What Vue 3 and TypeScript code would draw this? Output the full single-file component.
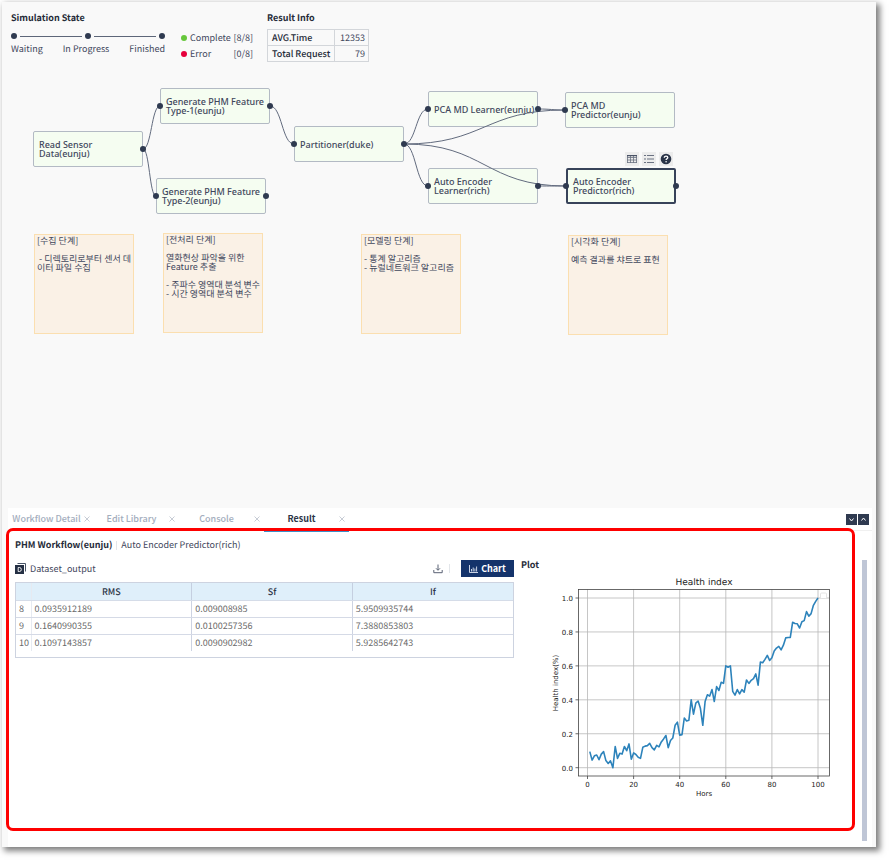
<script setup lang="ts">
import { computed, ref } from 'vue'

interface FlowNode {
  id: string
  label: string
  x: number
  y: number
  input: boolean
  output: boolean
}

interface Note {
  x: number
  y: number
  text: string
}

const NODE_W = 110
const NODE_H = 36

const nodes: FlowNode[] = [
  { id: 'read', label: 'Read Sensor\nData(eunju)', x: 31, y: 61, input: false, output: true },
  { id: 'gen1', label: 'Generate PHM Feature\nType-1(eunju)', x: 158, y: 18, input: true, output: true },
  { id: 'gen2', label: 'Generate PHM Feature\nType-2(eunju)', x: 154, y: 108, input: true, output: true },
  { id: 'part', label: 'Partitioner(duke)', x: 292, y: 56, input: true, output: true },
  { id: 'pcaL', label: 'PCA MD Learner(eunju)', x: 426, y: 21, input: true, output: true },
  { id: 'pcaP', label: 'PCA MD\nPredictor(eunju)', x: 563, y: 22, input: true, output: false },
  { id: 'aeL', label: 'Auto Encoder\nLearner(rich)', x: 426, y: 98, input: true, output: true },
  { id: 'aeP', label: 'Auto Encoder\nPredictor(rich)', x: 564, y: 98, input: true, output: true },
]

const links: [string, string][] = [
  ['read', 'gen1'],
  ['read', 'gen2'],
  ['gen1', 'part'],
  ['part', 'pcaL'],
  ['part', 'pcaP'],
  ['part', 'aeL'],
  ['part', 'aeP'],
  ['pcaL', 'pcaP'],
  ['aeL', 'aeP'],
]

const selected = ref('aeP')

const byId = (id: string): FlowNode => nodes.find((n) => n.id === id) as FlowNode

const edgePaths = links.map(([from, to]) => {
  const a = byId(from)
  const b = byId(to)
  const x1 = a.x + NODE_W
  const y1 = a.y + NODE_H / 2
  const x2 = b.x
  const y2 = b.y + NODE_H / 2
  const mid = (x1 + x2) / 2
  return `M${x1} ${y1}C${mid} ${y1} ${mid} ${y2} ${x2} ${y2}`
})

const ports = nodes.flatMap((n) => {
  const list: { x: number; y: number }[] = []
  if (n.input) list.push({ x: n.x, y: n.y + NODE_H / 2 })
  if (n.output) list.push({ x: n.x + NODE_W, y: n.y + NODE_H / 2 })
  return list
})

const notes: Note[] = [
  { x: 32, y: 164, text: '[수집 단계]\n\n - 디렉토리로부터 센서 데\n이터 파일 수집' },
  { x: 161, y: 163, text: '[전처리 단계]\n\n열화현상 파악을 위한\nFeature 추출\n\n- 주파수 영역대 분석 변수\n- 시간 영역대 분석 변수' },
  { x: 359, y: 164, text: '[모델링 단계]\n\n- 통계 알고리즘\n- 뉴럴네트워크 알고리즘' },
  { x: 566, y: 165, text: '[시각화 단계]\n\n예측 결과를 챠트로 표현' },
]

const tabs = ['Workflow Detail', 'Edit Library', 'Console', 'Result']
const activeTab = ref('Result')

const rows = [
  ['8', '0.0935912189', '0.009008985', '5.9509935744'],
  ['9', '0.1640990355', '0.0100257356', '7.3880853803'],
  ['10', '0.1097143857', '0.0090902982', '5.9285642743'],
]

const health: number[] = [
  0.095, 0.045, 0.07, 0.075, 0.047, 0.08, 0.095, 0.042, 0.025, 0.04,
  0, 0.125, 0.055, 0.085, 0.08, 0.125, 0.1, 0.14, 0.05, 0.087,
  0.078, 0.062, 0.055, 0.12, 0.127, 0.13, 0.143, 0.118, 0.105, 0.132,
  0.123, 0.152, 0.17, 0.19, 0.118, 0.16, 0.175, 0.25, 0.268, 0.192,
  0.195, 0.293, 0.276, 0.28, 0.4, 0.315, 0.38, 0.393, 0.35, 0.25,
  0.39, 0.43, 0.422, 0.46, 0.39, 0.478, 0.455, 0.503, 0.497, 0.6,
  0.592, 0.6, 0.45, 0.428, 0.46, 0.435, 0.46, 0.445, 0.517, 0.497,
  0.515, 0.525, 0.553, 0.487, 0.622, 0.618, 0.638, 0.662, 0.632, 0.648,
  0.687, 0.705, 0.715, 0.695, 0.722, 0.765, 0.767, 0.768, 0.857, 0.85,
  0.848, 0.823, 0.86, 0.867, 0.92, 0.893, 0.908, 0.957, 0.98, 1,
]

const px = (v: number): number => 37.5 + v * 2.305
const py = (v: number): number => 193.7 - v * 169.7
const xTicks = [0, 20, 40, 60, 80, 100]
const yTicks = [0, 0.2, 0.4, 0.6, 0.8, 1]
const linePoints = computed(() =>
  health.map((v, i) => `${px(i + 1).toFixed(1)},${py(v).toFixed(1)}`).join(' '),
)
</script>

<template>
  <main class="window">
    <header class="summary">
      <section class="state">
        <h2>Simulation State</h2>
        <div class="track">
          <i class="dot"></i><i class="bar"></i><i class="dot"></i><i class="bar"></i><i class="dot"></i>
        </div>
        <div class="steps"><span>Waiting</span><span>In Progress</span><span>Finished</span></div>
      </section>
      <ul class="counts">
        <li><i class="led ok"></i><span>Complete</span><span>[8/8]</span></li>
        <li><i class="led bad"></i><span>Error</span><span>[0/8]</span></li>
      </ul>
      <section class="info">
        <h2>Result Info</h2>
        <table>
          <tbody>
            <tr><th scope="row">AVG.Time</th><td>12353</td></tr>
            <tr><th scope="row">Total Request</th><td>79</td></tr>
          </tbody>
        </table>
      </section>
    </header>

    <section class="canvas" aria-label="Workflow">
      <button
        v-for="n in nodes"
        :key="n.id"
        type="button"
        class="node"
        :class="{ selected: n.id === selected }"
        :style="{ left: n.x + 'px', top: n.y + 'px' }"
        @click="selected = n.id"
      >{{ n.label }}</button>

      <svg class="edges" aria-hidden="true">
        <path v-for="(d, i) in edgePaths" :key="i" :d="d" />
        <circle v-for="(p, i) in ports" :key="'p' + i" :cx="p.x" :cy="p.y" r="3" />
      </svg>

      <div class="tools">
        <button type="button" aria-label="Table">
          <svg viewBox="0 0 14 14"><path d="M2.500 3v8M5.500 3v8M8.500 3v8M11.500 3v8M2 5.500h10M2 8h10M2 10.500h10" fill="none" stroke="#6b7282" stroke-width=".8" /><path d="M2 3h10v1.200H2z" fill="#4a5366" /></svg>
        </button>
        <button type="button" aria-label="List">
          <svg viewBox="0 0 14 14"><path d="M2 3.500h2M2 7h2M2 10.500h2M5 3.500h7M5 7h7M5 10.500h7" fill="none" stroke="#6b7282" /></svg>
        </button>
        <button type="button" aria-label="Help">
          <svg viewBox="0 0 14 14"><circle cx="7" cy="7" r="5.3" fill="#2a3448" /><path d="M5.300 5.700c0-2.300 3.500-2.100 3.500-.1 0 1.200-1.700 1.300-1.700 2.500" fill="none" stroke="#fff" stroke-width="1.3" /><circle cx="7.1" cy="9.8" r=".8" fill="#fff" /></svg>
        </button>
      </div>

      <p
        v-for="(t, i) in notes"
        :key="'n' + i"
        class="note"
        :style="{ left: t.x + 'px', top: t.y + 'px' }"
      >{{ t.text }}</p>
    </section>

    <section class="panel">
      <nav class="tabs">
        <div v-for="t in tabs" :key="t" class="tab" :class="{ active: t === activeTab }">
          <button type="button" class="name" @click="activeTab = t">{{ t }}</button>
          <button type="button" class="close" :aria-label="'Close ' + t">
            <svg viewBox="0 0 6 6"><path d="M.5.5l5 5M5.500.5l-5 5" /></svg>
          </button>
        </div>
        <div class="fold">
          <button type="button" aria-label="Collapse"><svg viewBox="0 0 11 11"><path d="M3.500 4.500l2 2.500 2-2.500" /></svg></button>
          <button type="button" aria-label="Expand"><svg viewBox="0 0 11 11"><path d="M3.500 6.500l2-2.500 2 2.500" /></svg></button>
        </div>
      </nav>

      <div class="body">
        <p class="crumbs"><strong>PHM Workflow(eunju)</strong><i></i><span>Auto Encoder Predictor(rich)</span></p>
        <div class="result">
          <section class="data">
            <div class="bar-row">
              <svg class="ds" viewBox="0 0 11 11" aria-hidden="true">
                <path d="M2.500.5h8v8" fill="none" stroke="#4a5568" />
                <path d="M0 2h9v9H0z" fill="#253044" />
                <path d="M3.200 4.500h1.300q1.800 0 1.800 2t-1.800 2H3.200z" fill="none" stroke="#fff" stroke-width=".9" />
              </svg>
              <span class="ds-name">Dataset_output</span>
              <button type="button" class="download" aria-label="Download">
                <svg viewBox="0 0 10 10"><path d="M5 .5v5.500M3 4.300l2 2 2-2M.8 6v2.700h8.400V6" /></svg>
              </button>
              <i class="sep"></i>
              <button type="button" class="chart-btn">
                <svg viewBox="0 0 9 8" aria-hidden="true"><path d="M.5 0v7.500H9M2.500 6.500V4M4.200 6.500V2.500M5.900 6.500V3.500M7.600 6.500V1.500" /></svg>
                Chart
              </button>
            </div>
            <div class="grid-box">
              <table>
                <colgroup><col class="c0" /><col /><col /><col /></colgroup>
                <thead>
                  <tr><th></th><th scope="col">RMS</th><th scope="col">Sf</th><th scope="col">If</th></tr>
                </thead>
                <tbody>
                  <tr v-for="r in rows" :key="r[0]"><td v-for="(c, i) in r" :key="i">{{ c }}</td></tr>
                </tbody>
              </table>
            </div>
          </section>

          <section class="plot">
            <h3>Plot</h3>
            <svg viewBox="0 0 290 230" role="img" aria-label="Health index">
              <g class="gridlines">
                <path v-for="x in xTicks" :key="'x' + x" :d="`M${px(x)} 15.500V202`" />
                <path v-for="y in yTicks" :key="'y' + y" :d="`M28.500 ${py(y)}H279.500`" />
              </g>
              <polyline :points="linePoints" />
              <g class="axis">
                <rect x="28.5" y="15.5" width="251" height="186.5" />
                <path v-for="x in xTicks" :key="'x' + x" :d="`M${px(x)} 202v3`" />
                <path v-for="y in yTicks" :key="'y' + y" :d="`M25.500 ${py(y)}h3`" />
              </g>
              <rect class="legend" x="270.5" y="19" width="6" height="5.5" rx="1" />
              <g class="labels">
                <text v-for="x in xTicks" :key="'x' + x" :x="px(x)" y="213" text-anchor="middle">{{ x }}</text>
                <text v-for="y in yTicks" :key="'y' + y" x="23" :y="py(y) + 3" text-anchor="end">{{ y.toFixed(1) }}</text>
                <text x="154" y="222" text-anchor="middle">Hors</text>
                <text transform="translate(8 109) rotate(-90)" text-anchor="middle">Health index(%)</text>
                <text class="title" x="154" y="11" text-anchor="middle">Health index</text>
              </g>
            </svg>
          </section>
        </div>
      </div>
      <div class="scroll"></div>
      <div class="frame"></div>
    </section>
  </main>
</template>

<style>
body {
  margin: 0;
  background: #fff;
}
</style>

<style scoped>
.window {
  box-sizing: border-box;
  display: flex;
  flex-direction: column;
  min-height: calc(100vh - 15px);
  margin: 2px 13px 13px 2px;
  background: #f9f9f9;
  box-shadow: 3px 3px 6px 1px rgba(0, 0, 0, 0.5);
  font: 9px/12px "Noto Sans CJK KR", sans-serif;
  text-rendering: geometricPrecision;
  color: #3f475c;
}
h2, h3, p, ul {
  margin: 0;
  padding: 0;
}
h2, h3 {
  font-size: 9px;
  line-height: 12px;
  font-weight: 700;
  color: #252b38;
}
button {
  font: inherit;
  color: inherit;
  margin: 0;
  padding: 0;
  border: 0;
  background: none;
  cursor: pointer;
}
svg {
  display: block;
}

.summary {
  display: flex;
  box-sizing: border-box;
  min-height: 68px;
  padding: 10px 9px 0;
}
.state {
  width: 154px;
}
.track {
  display: flex;
  align-items: center;
  gap: 3px;
  margin-top: 9px;
}
.dot {
  width: 6px;
  height: 6px;
  border-radius: 50%;
  background: #2f3a50;
}
.bar {
  flex: 1;
  height: 1px;
  background: #5d6679;
}
.steps {
  display: flex;
  justify-content: space-between;
  margin-top: 4px;
}
.counts {
  list-style: none;
  width: 72px;
  margin-left: 16px;
  padding-top: 20px;
}
.counts li {
  display: grid;
  grid-template-columns: 9px 1fr auto;
  align-items: center;
  margin-bottom: 4px;
}
.led {
  width: 6px;
  height: 6px;
  border-radius: 50%;
}
.ok {
  background: #67c73c;
}
.bad {
  background: #e6003c;
}
.info {
  margin-left: 14px;
}
.info table {
  width: 102px;
  margin-top: 5px;
  border-collapse: collapse;
}
.info th,
.info td {
  box-sizing: border-box;
  height: 16px;
  padding: 1px 3px 0 4px;
  border: 1px solid #d3d6da;
  line-height: 12px;
}
.info th {
  text-align: left;
  font-weight: 500;
  color: #252b38;
}
.info td {
  text-align: right;
}

.canvas {
  position: relative;
  flex: 1;
  min-height: 438px;
}
.node {
  position: absolute;
  box-sizing: border-box;
  width: 110px;
  height: 36px;
  padding: 0 5px;
  border: 1px solid #b3bac4;
  border-radius: 2px;
  background: #f5fdf1;
  font-family: "Noto Sans", sans-serif;
  font-weight: 500;
  line-height: 9px;
  text-align: left;
  white-space: pre;
}
.node.selected {
  border: 2px solid #38435a;
}
.edges {
  position: absolute;
  inset: 0;
  width: 100%;
  height: 100%;
  pointer-events: none;
}
.edges path {
  fill: none;
  stroke: #626b7e;
  stroke-width: 1;
}
.edges circle {
  fill: #2f3a50;
}
.tools {
  position: absolute;
  left: 623px;
  top: 82px;
  display: flex;
  gap: 3px;
}
.tools button {
  width: 14px;
  height: 14px;
  background: #ececec;
}
.note {
  position: absolute;
  box-sizing: border-box;
  width: 100px;
  height: 100px;
  padding: 1px 2px;
  border: 1px solid #fbdfb0;
  background: #faf1e6;
  line-height: 9px;
  white-space: pre;
}

.panel {
  position: relative;
  min-height: 339px;
  margin: 0 4px 0 6px;
  background: #fff;
}
.tabs {
  display: flex;
  height: 22px;
  padding-left: 1px;
  border-bottom: 1px solid #f0f0f0;
}
.tab {
  box-sizing: border-box;
  display: flex;
  align-items: center;
  width: 85px;
  padding-right: 4px;
  color: #a3adbd;
  font-weight: 500;
}
.name {
  flex: 1;
}
.tab.active {
  color: #2d3648;
  font-weight: 700;
  border-bottom: 2px solid #3d8fc9;
  height: 24px;
}
.close svg {
  width: 6px;
  height: 6px;
  fill: none;
  stroke: #b9bfca;
  stroke-width: 0.8;
}
.fold {
  display: flex;
  align-items: center;
  gap: 1px;
  margin-left: auto;
  padding-right: 3px;
}
.fold button {
  width: 11px;
  height: 11px;
  background: #2f3a50;
}
.fold path {
  fill: none;
  stroke: #fff;
}
.body {
  padding: 8px 24px 24px 7px;
}
.crumbs {
  display: flex;
  align-items: center;
}
.crumbs strong {
  color: #252b38;
}
.crumbs i {
  width: 1px;
  height: 9px;
  margin: 0 4px;
  background: #e3e6ea;
}
.result {
  display: grid;
  grid-template-columns: 499px 1fr;
  gap: 7px;
  margin-top: 8px;
}
.bar-row {
  display: flex;
  align-items: center;
  height: 19px;
}
.ds {
  width: 11px;
  height: 11px;
}
.ds-name {
  margin-left: 4px;
}
.download {
  margin-left: auto;
}
.download svg {
  width: 10px;
  height: 10px;
  fill: none;
  stroke: #5a6274;
}
.sep {
  width: 1px;
  height: 9px;
  margin: 0 11px 0 6px;
  background: #e3e6ea;
}
.chart-btn {
  display: flex;
  align-items: center;
  justify-content: center;
  gap: 3px;
  width: 53px;
  height: 17px;
  background: #14336b;
  color: #fff;
  font-weight: 700;
}
.chart-btn svg {
  width: 9px;
  height: 8px;
  fill: none;
  stroke: #c9d2e4;
}
.grid-box {
  margin-top: 4px;
  padding-bottom: 6px;
  border: 1px solid #cdd3e0;
}
.grid-box table {
  width: 100%;
  table-layout: fixed;
  border-collapse: collapse;
}
.c0 {
  width: 15px;
}
.grid-box th {
  height: 17px;
  padding: 0;
  background: #dfeffa;
  border-right: 1px solid #c5cfe0;
  border-bottom: 1px solid #d5dce8;
  font-weight: 500;
  color: #2d3648;
}
.grid-box td {
  height: 16px;
  padding: 0 3px;
  border-right: 1px solid #cdd3e2;
  border-bottom: 1px solid #d5dae6;
  color: #6a6a6a;
}
.grid-box th:first-child,
.grid-box td:first-child {
  border-right-color: #e6eaf1;
}
.grid-box th:last-child,
.grid-box td:last-child {
  border-right: 0;
}
.grid-box tr:last-child td {
  border-bottom: 0;
}
.plot h3 {
  line-height: 12px;
}
.plot svg {
  width: 100%;
  max-width: 290px;
  margin: 3px 0 0 29px;
}
.gridlines path {
  stroke: #b8b8b8;
  stroke-width: 0.8;
}
.plot polyline {
  fill: none;
  stroke: #2d83bb;
  stroke-width: 1.6;
  stroke-linejoin: round;
}
.axis rect,
.axis path {
  fill: none;
  stroke: #444;
  stroke-width: 0.8;
}
.legend {
  fill: #fff;
  stroke: #ddd;
  stroke-width: 0.8;
}
.labels text {
  font-family: "DejaVu Sans", sans-serif;
  font-size: 7px;
  fill: #222;
}
.labels .title {
  font-size: 9px;
}
.scroll {
  position: absolute;
  right: 5px;
  top: 52px;
  bottom: 6px;
  width: 5px;
  background: #bfc6d6;
}
.frame {
  position: absolute;
  left: -2px;
  right: 17px;
  top: 20px;
  bottom: 16px;
  border: 3px solid #fe0000;
  border-radius: 7px;
  pointer-events: none;
}
</style>
